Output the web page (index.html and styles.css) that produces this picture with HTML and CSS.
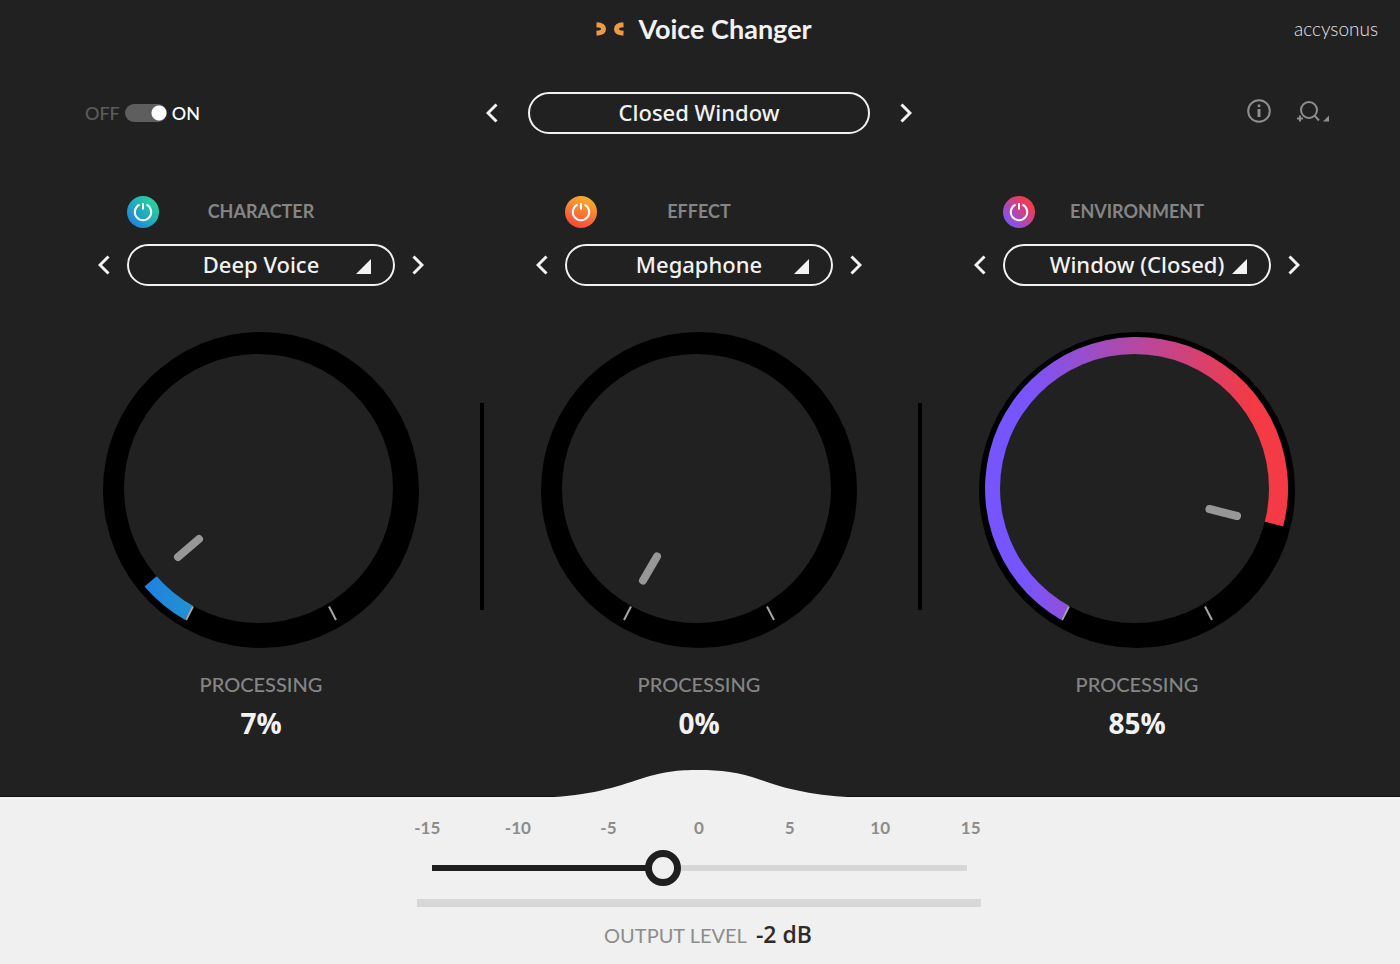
FILE: index.html
```
<!DOCTYPE html>
<html lang="en">
<head>
    <meta charset="UTF-8">
    <meta name="viewport" content="width=device-width, initial-scale=1.0">
    <title>Voice Changer</title>
    <link rel="stylesheet" href="styles.css">
</head>
<body>
    <main class="panel">
        <header class="topbar">
            <div class="brand">
                <svg class="brand-mark" width="28" height="16" viewBox="0 0 28 16" aria-hidden="true">
                    <path d="M0.500 3.800C4.500 4 7.500 5.500 7.500 8s-3 4-7 4.200M27.500 3.800C23.500 4 20.500 5.500 20.500 8s3 4 7 4.200" />
                </svg>
                <h1>Voice Changer</h1>
            </div>
            <span class="company">accysonus</span>
        </header>

        <div class="toolbar">
            <label class="bypass">
                <span class="off">OFF</span>
                <input type="checkbox" checked>
                <span>ON</span>
            </label>

            <div class="picker">
                <button class="arrow" aria-label="Previous preset"><svg width="12" height="20" viewBox="0 0 12 20"><path d="M10.500 1.500L2 10l8.500 8.500" /></svg></button>
                <button class="preset pill">Closed Window</button>
                <button class="arrow" aria-label="Next preset"><svg width="12" height="20" viewBox="0 0 12 20"><path d="M1.500 1.500L10 10l-8.500 8.500" /></svg></button>
            </div>

            <div class="tools">
                <button aria-label="Info">
                    <svg width="24" height="24" viewBox="0 0 24 24">
                        <circle cx="12" cy="12" r="10.800" />
                        <path class="stem" d="M12 10v8" />
                        <circle class="solid" cx="12" cy="6.700" r="1.500" />
                    </svg>
                </button>
                <button aria-label="Zoom">
                    <svg width="34" height="24" viewBox="0 0 34 24">
                        <circle cx="13" cy="11" r="8" />
                        <path d="M18.600 16.600L23 21.500M1 19.500h6M4 16.500v6" />
                        <path class="solid" d="M33 16.500v6H27z" />
                    </svg>
                </button>
            </div>
        </div>

        <div class="modules">
            <!-- character -->
            <section class="module">
                <div class="module-head">
                    <button class="power character" aria-label="Character power"><svg width="20" height="20" viewBox="0 0 20 20"><path d="M6.500 2.700a8.200 8.200 0 1 0 7 0M10 1v6.500" /></svg></button>
                    <label for="character">CHARACTER</label>
                </div>
                <div class="picker">
                    <button class="arrow" aria-label="Previous character"><svg width="12" height="20" viewBox="0 0 12 20"><path d="M10.500 1.500L2 10l8.500 8.500" /></svg></button>
                    <div class="dropdown">
                        <select id="character" class="pill"><option>Deep Voice</option></select>
                        <svg class="corner" width="15" height="15" viewBox="0 0 15 15" aria-hidden="true"><path d="M15 0v15H0z" /></svg>
                    </div>
                    <button class="arrow" aria-label="Next character"><svg width="12" height="20" viewBox="0 0 12 20"><path d="M1.500 1.500L10 10l-8.500 8.500" /></svg></button>
                </div>
                <svg class="knob" viewBox="0 0 316 316" role="img" aria-label="Character processing 7%">
                    <defs>
                        <linearGradient id="blue" gradientUnits="userSpaceOnUse" x1="6" y1="0" x2="309" y2="0">
                            <stop offset="0.120" stop-color="#2180e0" />
                            <stop offset="0.880" stop-color="#22dd92" />
                        </linearGradient>
                    </defs>
                    <circle class="ring" cx="158" cy="158" r="158" />
                    <path fill="url(#blue)" d="M157.500 156.500L81.800 287.700A151.500 151.500 0 0 1 41.500 254.500Z" />
                    <circle class="face" cx="155.500" cy="156.500" r="134.500" />
                    <path class="tick" d="M83 288l7-13.500M226 274.500l7 13.500" />
                    <path class="pointer" d="M96 207L75 225" />
                </svg>
                <p class="caption">PROCESSING</p>
                <p class="amount">7%</p>
            </section>

            <div class="divider"></div>

            <!-- effect -->
            <section class="module">
                <div class="module-head">
                    <button class="power effect" aria-label="Effect power"><svg width="20" height="20" viewBox="0 0 20 20"><path d="M6.500 2.700a8.200 8.200 0 1 0 7 0M10 1v6.500" /></svg></button>
                    <label for="effect">EFFECT</label>
                </div>
                <div class="picker">
                    <button class="arrow" aria-label="Previous effect"><svg width="12" height="20" viewBox="0 0 12 20"><path d="M10.500 1.500L2 10l8.500 8.500" /></svg></button>
                    <div class="dropdown">
                        <select id="effect" class="pill"><option>Megaphone</option></select>
                        <svg class="corner" width="15" height="15" viewBox="0 0 15 15" aria-hidden="true"><path d="M15 0v15H0z" /></svg>
                    </div>
                    <button class="arrow" aria-label="Next effect"><svg width="12" height="20" viewBox="0 0 12 20"><path d="M1.500 1.500L10 10l-8.500 8.500" /></svg></button>
                </div>
                <svg class="knob" viewBox="0 0 316 316" role="img" aria-label="Effect processing 0%">
                    <circle class="ring" cx="158" cy="158" r="158" />
                    <circle class="face" cx="155.500" cy="156.500" r="134.500" />
                    <path class="tick" d="M83 288l7-13.500M226 274.500l7 13.500" />
                    <path class="pointer" d="M116 224.500L102 248.500" />
                </svg>
                <p class="caption">PROCESSING</p>
                <p class="amount">0%</p>
            </section>

            <div class="divider"></div>

            <!-- environment -->
            <section class="module">
                <div class="module-head">
                    <button class="power environment" aria-label="Environment power"><svg width="20" height="20" viewBox="0 0 20 20"><path d="M6.500 2.700a8.200 8.200 0 1 0 7 0M10 1v6.500" /></svg></button>
                    <label for="environment">ENVIRONMENT</label>
                </div>
                <div class="picker">
                    <button class="arrow" aria-label="Previous environment"><svg width="12" height="20" viewBox="0 0 12 20"><path d="M10.500 1.500L2 10l8.500 8.500" /></svg></button>
                    <div class="dropdown">
                        <select id="environment" class="pill"><option>Window (Closed)</option></select>
                        <svg class="corner" width="15" height="15" viewBox="0 0 15 15" aria-hidden="true"><path d="M15 0v15H0z" /></svg>
                    </div>
                    <button class="arrow" aria-label="Next environment"><svg width="12" height="20" viewBox="0 0 12 20"><path d="M1.500 1.500L10 10l-8.500 8.500" /></svg></button>
                </div>
                <svg class="knob" viewBox="0 0 316 316" role="img" aria-label="Environment processing 85%">
                    <defs>
                        <linearGradient id="violet" gradientUnits="userSpaceOnUse" x1="6" y1="0" x2="309" y2="0">
                            <stop offset="0.120" stop-color="#7655ff" />
                            <stop offset="0.880" stop-color="#f33a45" />
                        </linearGradient>
                    </defs>
                    <circle class="ring" cx="158" cy="158" r="158" />
                    <path fill="url(#violet)" d="M157.500 156.500L81.800 287.700A151.500 151.500 0 1 1 304.200 194.500Z" />
                    <circle class="face" cx="155.500" cy="156.500" r="134.500" />
                    <path class="tick" d="M83 288l7-13.500M226 274.500l7 13.500" />
                    <path class="pointer" d="M230.500 177L258 184" />
                </svg>
                <p class="caption">PROCESSING</p>
                <p class="amount">85%</p>
            </section>
        </div>
    </main>

    <footer class="output">
        <svg class="bump" width="322" height="29" viewBox="0 0 322 29" aria-hidden="true">
            <path d="M0 29V28.500C45 28 72 20 99 11S140 1 161 1S201 3 223 11S277 28 322 28.500V29Z" />
        </svg>
        <div class="scale">
            <span>-15</span>
            <span>-10</span>
            <span>-5</span>
            <span>0</span>
            <span>5</span>
            <span>10</span>
            <span>15</span>
        </div>
        <input class="level" id="level" type="range" min="-15" max="15" value="-2" style="--fill: 43%">
        <div class="meter"></div>
        <p class="readout"><label for="level">OUTPUT LEVEL</label> <output for="level">-2 dB</output></p>
    </footer>
</body>
</html>
```

FILE: styles.css
```
* {
    box-sizing: border-box;
}
body {
    margin: 0;
    min-height: 100vh;
    display: flex;
    flex-direction: column;
    background-color: #f0f0f0;
    color: #f2f2f2;
    font-family: "Open Sans", "Noto Sans", sans-serif;
}
h1, p {
    margin: 0;
}
button, select {
    padding: 0;
    border: 0;
    background: none;
    color: inherit;
    font: inherit;
    cursor: pointer;
}
svg {
    display: block;
    fill: none;
}
.panel {
    background-color: #212121;
    padding: 0 2px 54px 0;
    border-bottom: 1px solid #111;
}

/* title row */
.topbar {
    display: grid;
    grid-template-columns: 1fr auto 1fr;
    align-items: center;
    height: 58px;
    padding-left: 10px;
}
.brand {
    grid-column: 2;
    display: flex;
    align-items: center;
    gap: 14px;
}
.brand-mark {
    stroke: #ee9a45;
    stroke-width: 5;
}
.brand h1 {
    font-family: Lato, sans-serif;
    font-size: 27px;
    line-height: 30px;
    font-weight: 700;
}
.company {
    justify-self: end;
    margin-right: 20px;
    font-family: Lato, sans-serif;
    font-size: 19px;
    line-height: 28px;
    font-weight: 300;
    color: #e4e4e4;
}

/* on/off, preset and tools */
.toolbar {
    display: grid;
    grid-template-columns: 1fr auto 1fr;
    align-items: center;
    margin-top: 34px;
}
.bypass {
    display: flex;
    align-items: center;
    gap: 5px;
    margin-left: 85px;
    font-family: Lato, sans-serif;
    font-size: 18px;
    line-height: 24px;
    font-weight: 500;
    color: #fff;
}
.bypass .off {
    color: #5c5c5c;
}
.bypass input {
    appearance: none;
    width: 42px;
    height: 18px;
    margin: 0;
    border-radius: 9px;
    background: radial-gradient(circle at 34px 9px, #fff 7px, #5e5e5e 8px);
}
.picker {
    display: flex;
    align-items: center;
    justify-content: center;
    gap: 17px;
}
.toolbar .picker {
    gap: 30px;
}
.arrow svg {
    stroke: #f2f2f2;
    stroke-width: 3;
}
.pill {
    height: 42px;
    padding-bottom: 2px;
    border: 2px solid #f2f2f2;
    border-radius: 21px;
    font-family: "Noto Sans", sans-serif;
    font-size: 22px;
    font-weight: 500;
    text-align: center;
}
.preset {
    width: 342px;
}
.tools {
    justify-self: end;
    display: flex;
    gap: 25px;
    margin-right: 68px;
    padding-bottom: 4px;
}
.tools svg {
    stroke: #8f8f8f;
    stroke-width: 2;
}
.tools .stem {
    stroke-width: 3;
}
.tools .solid {
    fill: #8f8f8f;
    stroke: none;
}

/* modules */
.modules {
    display: grid;
    grid-template-columns: 1fr 4px 1fr 4px 1fr;
    max-width: 1310px;
    margin: 62px auto 0;
}
.module {
    display: flex;
    flex-direction: column;
    align-items: center;
}
.module-head {
    display: grid;
    grid-template-columns: 32px 1fr 32px;
    align-items: center;
    width: 268px;
    margin-bottom: 16px;
    font-family: Lato, sans-serif;
    font-size: 18px;
    line-height: 30px;
    font-weight: 700;
    text-align: center;
    color: #858585;
}
.module-head label {
    padding-bottom: 2px;
}
.power {
    display: grid;
    place-items: center;
    width: 32px;
    height: 32px;
    border-radius: 50%;
}
.power svg {
    stroke: #fff;
    stroke-width: 2;
}
.power.character {
    background: linear-gradient(45deg, #2180e0 10%, #25d998 90%);
}
.power.effect {
    background: linear-gradient(20deg, #f4473f 10%, #f7b02c 90%);
}
.power.environment {
    background: linear-gradient(45deg, #7655ff 10%, #f33a50 80%);
}
.dropdown {
    position: relative;
}
.dropdown select {
    appearance: none;
    display: block;
    width: 268px;
    text-align-last: center;
}
.dropdown option {
    color: #212121;
}
.corner {
    position: absolute;
    right: 24px;
    top: 15px;
    fill: #f2f2f2;
    pointer-events: none;
}
.knob {
    width: 316px;
    margin: 46px 0 20px;
}
.ring {
    fill: #000;
}
.face {
    fill: #212121;
}
.tick {
    stroke: #a5a5a5;
    stroke-width: 2;
}
.pointer {
    stroke: #979797;
    stroke-width: 8;
    stroke-linecap: round;
}
.caption {
    font-family: Lato, sans-serif;
    font-size: 20px;
    line-height: 32px;
    font-weight: 500;
    color: #858585;
}
.amount {
    margin-top: 4px;
    font-size: 28px;
    line-height: 38px;
    font-weight: 700;
}
.divider {
    align-self: start;
    height: 207px;
    margin: 207px -2px 0 2px;
    background-color: #000;
}

/* output level */
.output {
    position: relative;
    display: flex;
    flex-direction: column;
    align-items: center;
    padding: 19px 2px 12px 0;
    color: #8c8c8c;
}
.bump {
    position: absolute;
    top: -28px;
    fill: #f0f0f0;
}
.scale {
    display: grid;
    grid-template-columns: repeat(7, 1fr);
    width: 634px;
    font-family: Lato, sans-serif;
    font-size: 17px;
    line-height: 24px;
    font-weight: 700;
    text-align: center;
}
.level {
    appearance: none;
    width: 571px;
    height: 36px;
    margin: 10px 0 13px;
    background: none;
}
.level::-webkit-slider-runnable-track {
    height: 6px;
    background: linear-gradient(to right, transparent 18px, #1f1f1f 18px, #1f1f1f var(--fill), #d7d7d7 var(--fill), #d7d7d7 calc(100% - 18px), transparent calc(100% - 18px));
}
.level::-webkit-slider-thumb {
    appearance: none;
    width: 36px;
    height: 36px;
    margin-top: -15px;
    border: 7px solid #1f1f1f;
    border-radius: 50%;
    background-color: #f0f0f0;
}
.meter {
    width: 564px;
    height: 8px;
    background-color: #d7d7d7;
}
.readout {
    display: flex;
    align-items: baseline;
    gap: 9px;
    margin-top: 11px;
    padding-left: 18px;
    font-family: Lato, sans-serif;
    font-size: 20px;
    line-height: 32px;
}
.readout output {
    font-family: "Open Sans", sans-serif;
    font-size: 23px;
    font-weight: 600;
    color: #2b2b2b;
}
```
